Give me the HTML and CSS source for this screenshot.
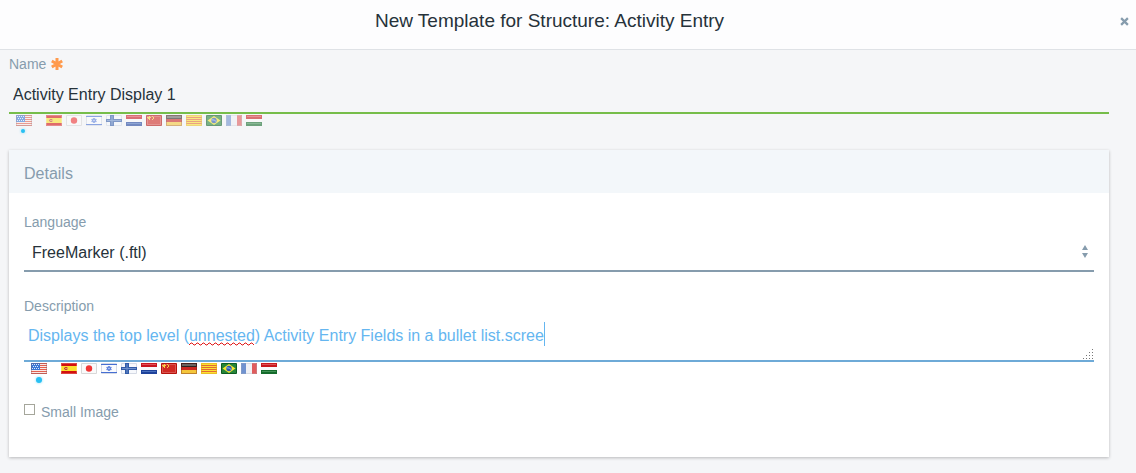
FILE: index.html
```html
<!DOCTYPE html>
<html lang="en">
<head>
<meta charset="utf-8">
<title>New Template for Structure: Activity Entry</title>
<link rel="stylesheet" href="styles.css">
</head>
<body>
<svg class="sprite" aria-hidden="true">
  <symbol id="us" viewBox="0 0 16 11"><path fill="#f9e9e6" d="M0 0h16v11H0z"/><path stroke="#e2604f" d="M0 .5h16M0 2.5h16M0 4.5h16M0 6.5h16M0 8.5h16M0 10.5h16"/><path fill="#3b78d6" d="M0 0h9v7H0z"/><path stroke="#dfe9fb" stroke-dasharray="1 1" d="M1 1.5h7M2 3.5h6M1 5.5h7"/><path fill="none" stroke="#7d5560" stroke-opacity=".35" d="M.5.5h15v10H.5z"/></symbol>
  <symbol id="es" viewBox="0 0 16 11"><path fill="#d2100f" d="M0 0h16v11H0z"/><path fill="#fbe02e" d="M0 3h16v5H0z"/><path fill="#e8a04a" d="M3 4h4v3H3z"/><path fill="#c5452a" d="M4 4h2v1H4zM4 6h2v1H4zM3 5h1v1H3z"/><path fill="none" stroke="#fff" stroke-opacity=".22" d="M.5.5h15v10H.5z"/></symbol>
  <symbol id="jp" viewBox="0 0 16 11"><path fill="#fafafa" stroke="#d8d8d8" d="M.5.5h15v10H.5z"/><circle cx="8" cy="5.5" r="3.2" fill="#f03535"/></symbol>
  <symbol id="il" viewBox="0 0 16 11"><path fill="#fafbfe" stroke="#d5dae5" d="M.5.5h15v10H.5z"/><path stroke="#466fd2" d="M0 1.5h16M0 9.5h16"/><path fill="#a9bdf0" stroke="#5b80dc" stroke-width=".9" d="M8 3l2.3 3.7H5.7zM8 8L5.7 4.3h4.6z"/></symbol>
  <symbol id="fi" viewBox="0 0 16 11"><path fill="#f6f8fc" stroke="#d5dae5" d="M.5.5h15v10H.5z"/><path fill="#315ba8" d="M4 0h4v11H4zM0 4h16v3H0z"/><path stroke="#6f91cc" d="M1 5.5h14M6 1v9"/></symbol>
  <symbol id="nl" viewBox="0 0 16 11"><path fill="#f9f9fb" d="M0 0h16v11H0z"/><path fill="#c91620" d="M0 0h16v4H0z"/><path fill="#1e429b" d="M0 7h16v4H0z"/><path fill="#e0525a" d="M1 1h14v1H1z"/><path fill="#4a70bd" d="M1 8h14v1H1z"/></symbol>
  <symbol id="cn" viewBox="0 0 16 11"><path fill="#d02a24" stroke="#b4120c" d="M.5.5h15v10H.5z"/><path fill="none" stroke="#fff" stroke-opacity=".2" d="M1.5 1.5h13v8h-13z"/><path fill="#f8cf42" d="M3 1h1v1h1v1H4v2H3V4H2V3H1V2h2zM6 1h1v1H6zM7 2h1v2H7zM6 4h1v1H6z"/></symbol>
  <symbol id="de" viewBox="0 0 16 11"><path fill="#c92620" d="M0 0h16v11H0z"/><path fill="#2a2422" d="M0 0h16v4H0z"/><path fill="#f4c63b" d="M0 7h16v4H0z"/><path fill="#6a6462" d="M1 1h14v2H1z"/><path fill="none" stroke="#721b15" stroke-opacity=".4" d="M.5.5h15v10H.5z"/></symbol>
  <symbol id="ct" viewBox="0 0 16 11"><path fill="#fbe133" d="M0 0h16v11H0z"/><path stroke="#e26a34" d="M0 2.5h16M0 4.5h16M0 6.5h16M0 8.5h16"/><path fill="none" stroke="#e1a51e" stroke-opacity=".6" d="M.5.5h15v10H.5z"/></symbol>
  <symbol id="br" viewBox="0 0 16 11"><path fill="#26843a" stroke="#0d5c21" d="M.5.5h15v10H.5z"/><path fill="#f7e52d" d="M8 1l6.5 4.5L8 10 1.5 5.5z"/><circle cx="8" cy="5.5" r="2.7" fill="#2858b1"/><path fill="none" stroke="#b8d1ed" stroke-width=".8" d="M5.5 4.8q3-.4 4.8 1.8"/></symbol>
  <symbol id="fr" viewBox="0 0 16 11"><path fill="#eef0f4" d="M0 0h16v11H0z"/><path fill="#5d83c9" d="M0 0h5v11H0z"/><path fill="#dc4646" d="M11 0h5v11h-5z"/><path fill="#fff" fill-opacity=".12" d="M1 1h14v9H1z"/><path fill="none" stroke="#b9bdc8" stroke-opacity=".4" d="M.5.5h15v10H.5z"/></symbol>
  <symbol id="hu" viewBox="0 0 16 11"><path fill="#fafafa" d="M0 0h16v11H0z"/><path fill="#c9181c" d="M0 0h16v4H0z"/><path fill="#156b2c" d="M0 7h16v4H0z"/><path fill="#dc5558" d="M1 1h14v1H1z"/><path fill="#419254" d="M1 8h14v1H1z"/></symbol>
</svg>

<header class="dialog-header">
  <h1 class="dialog-title">New Template for Structure: Activity Entry</h1>
  <button class="close" type="button" aria-label="Close"><svg class="close-icon" viewBox="0 0 8 8"><path d="M1 1l6 6M7 1L1 7"/></svg></button>
</header>

<form class="form">
  <label class="label" for="name">Name <svg class="required" viewBox="0 0 12 12" role="img" aria-label="Required"><path d="M6 0v12M.8 3l10.4 6M.8 9l10.4-6"/></svg></label>
  <input class="name-input" id="name" type="text" value="Activity Entry Display 1">
  <div class="flags flags-faded">
    <button class="flag flag-current" type="button" aria-label="English"><svg><use href="#us"/></svg></button>
    <button class="flag" type="button" aria-label="Spanish"><svg><use href="#es"/></svg></button>
    <button class="flag" type="button" aria-label="Japanese"><svg><use href="#jp"/></svg></button>
    <button class="flag" type="button" aria-label="Hebrew"><svg><use href="#il"/></svg></button>
    <button class="flag" type="button" aria-label="Finnish"><svg><use href="#fi"/></svg></button>
    <button class="flag" type="button" aria-label="Dutch"><svg><use href="#nl"/></svg></button>
    <button class="flag" type="button" aria-label="Chinese"><svg><use href="#cn"/></svg></button>
    <button class="flag" type="button" aria-label="German"><svg><use href="#de"/></svg></button>
    <button class="flag" type="button" aria-label="Catalan"><svg><use href="#ct"/></svg></button>
    <button class="flag" type="button" aria-label="Portuguese"><svg><use href="#br"/></svg></button>
    <button class="flag" type="button" aria-label="French"><svg><use href="#fr"/></svg></button>
    <button class="flag" type="button" aria-label="Hungarian"><svg><use href="#hu"/></svg></button>
  </div>

  <section class="panel">
    <h2 class="panel-title">Details</h2>
    <div class="panel-body">
      <label class="label" for="language">Language</label>
      <div class="select-wrap">
        <select class="select" id="language"><option>FreeMarker (.ftl)</option></select>
        <svg class="arrows" viewBox="0 0 6 13" aria-hidden="true"><path d="M3 0l3 5H0zM0 8h6l-3 5z"/></svg>
      </div>

      <label class="label label-spaced" for="description">Description</label>
      <div class="area-wrap">
        <textarea class="area" id="description" rows="1" spellcheck="false">Displays the top level (unnested) Activity Entry Fields in a bullet list.scree</textarea>
        <svg class="squiggle" viewBox="0 0 66 4" aria-hidden="true"><path d="M0 3l2-2h1l2 2h1l2-2h1l2 2h1l2-2h1l2 2h1l2-2h1l2 2h1l2-2h1l2 2h1l2-2h1l2 2h1l2-2h1l2 2h1l2-2h1l2 2h1l2-2h1l2 2h1l2-2h1l2 2h1l2-2h1l2 2"/></svg>
        <span class="caret"></span>
        <svg class="grip" viewBox="0 0 10 10" aria-hidden="true"><path d="M9 0h1v1H9zM6 3h1v1H6zM9 3h1v1H9zM3 6h1v1H3zM6 6h1v1H6zM9 6h1v1H9zM0 9h1v1H0zM3 9h1v1H3zM6 9h1v1H6zM9 9h1v1H9z"/></svg>
      </div>
      <div class="flags">
        <button class="flag flag-current" type="button" aria-label="English"><svg><use href="#us"/></svg></button>
        <button class="flag" type="button" aria-label="Spanish"><svg><use href="#es"/></svg></button>
        <button class="flag" type="button" aria-label="Japanese"><svg><use href="#jp"/></svg></button>
        <button class="flag" type="button" aria-label="Hebrew"><svg><use href="#il"/></svg></button>
        <button class="flag" type="button" aria-label="Finnish"><svg><use href="#fi"/></svg></button>
        <button class="flag" type="button" aria-label="Dutch"><svg><use href="#nl"/></svg></button>
        <button class="flag" type="button" aria-label="Chinese"><svg><use href="#cn"/></svg></button>
        <button class="flag" type="button" aria-label="German"><svg><use href="#de"/></svg></button>
        <button class="flag" type="button" aria-label="Catalan"><svg><use href="#ct"/></svg></button>
        <button class="flag" type="button" aria-label="Portuguese"><svg><use href="#br"/></svg></button>
        <button class="flag" type="button" aria-label="French"><svg><use href="#fr"/></svg></button>
        <button class="flag" type="button" aria-label="Hungarian"><svg><use href="#hu"/></svg></button>
      </div>

      <div class="check-row">
        <input class="check" id="small-image" type="checkbox">
        <label class="label" for="small-image">Small Image</label>
      </div>
    </div>
  </section>
</form>
</body>
</html>
```
FILE: styles.css
```css
* { box-sizing: border-box; }

body {
  margin: 0;
  background: #f5f6f8;
  color: #26323a;
  font: 16px/20px "Liberation Sans", Arial, sans-serif;
}

.sprite { display: block; width: 0; height: 0; }

button, input, select, textarea { font: inherit; color: inherit; border-radius: 0; }

.dialog-header {
  display: flex;
  align-items: center;
  padding: 9px 7px 16px 0;
  background: #fdfdfe;
  border-bottom: 1px solid #dfe2e6;
}

.dialog-title {
  flex: 1;
  margin: 0;
  padding-right: 21px;
  text-align: center;
  font-size: 19px;
  font-weight: 400;
  line-height: 24px;
}

.close { display: flex; padding: 0; border: 0; background: none; }
.close-icon { width: 9px; height: 9px; fill: none; stroke: #869cad; stroke-width: 2; }

.form { padding: 4px 27px 15px 9px; }

.label { display: block; color: #869cad; font-size: 14px; line-height: 20px; }
.label-spaced { margin-top: 24px; }

.required { width: 12px; height: 12px; margin-left: 1px; vertical-align: -1px; stroke: #ff9a4d; stroke-width: 3; }

.name-input {
  display: block;
  width: 100%;
  height: 40px;
  padding: 4px 4px 0;
  border: 0;
  border-bottom: 2px solid #76bd4a;
  background: none;
  outline: 0;
}

.flags { display: flex; gap: 4px; padding: 1px 0 0 7px; }
.flag { position: relative; width: 16px; height: 11px; padding: 0; border: 0; background: none; }
.flag svg { display: block; width: 16px; height: 11px; }
.flags-faded .flag svg { opacity: .6; }
.flag-current { margin-right: 10px; }

.flag-current::after {
  content: "";
  position: absolute;
  top: 14px;
  left: 5px;
  width: 6px;
  height: 6px;
  border-radius: 50%;
  background: #29c0f3;
  box-shadow: 0 0 3px #86dcf8;
}

.flags-faded .flag-current::after { width: 4px; height: 4px; }

.panel {
  margin-top: 24px;
  background: #fff;
  box-shadow: 0 1px 3px rgba(0, 0, 0, .25);
}

.panel-title {
  margin: 0;
  padding: 14px 15px 9px;
  background: #f3f7fa;
  color: #869cad;
  font-size: 16px;
  font-weight: 400;
  line-height: 20px;
}

.panel-body { padding: 19px 15px 35px; }

.select-wrap, .area-wrap { position: relative; }

.select {
  display: block;
  appearance: none;
  width: 100%;
  height: 40px;
  padding: 4px 8px 0;
  border: 0;
  border-bottom: 2px solid #869cad;
  background: none;
}

.arrows { position: absolute; top: 13px; right: 6px; width: 6px; height: 13px; fill: #869cad; }

.area {
  display: block;
  width: 100%;
  height: 46px;
  padding: 10px 4px 0;
  border: 0;
  border-bottom: 2px solid #6eaad7;
  background: none;
  color: #65b6f0;
  outline: 0;
  resize: none;
  overflow: hidden;
}

.squiggle { position: absolute; top: 26px; left: 165px; width: 66px; height: 4px; }
.squiggle path { fill: none; stroke: #e01b1b; stroke-width: 1; }
.caret { position: absolute; top: 6px; left: 520px; width: 1px; height: 24px; background: #65b6f0; }
.grip { position: absolute; right: 1px; bottom: 3px; width: 10px; height: 10px; fill: #777; shape-rendering: crispEdges; }

.check-row { display: flex; gap: 6px; margin-top: 28px; }

.check {
  appearance: none;
  width: 11px;
  height: 11px;
  margin: 2px 0 0;
  border: 1px solid #a5a69b;
  background: #fff;
}
```
